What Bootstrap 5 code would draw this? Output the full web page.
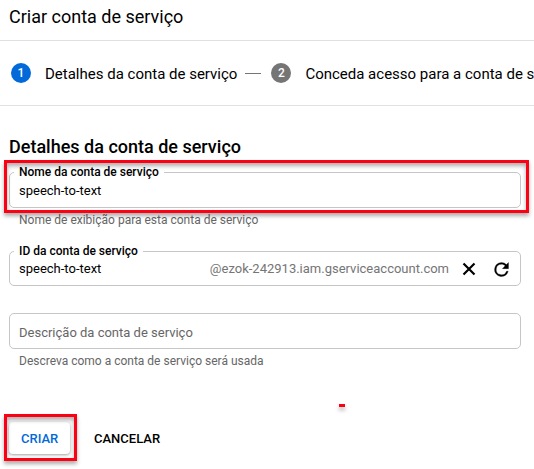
<!DOCTYPE html>
<html lang="pt-BR">
<head>
<meta charset="utf-8">
<meta name="viewport" content="width=device-width, initial-scale=1">
<title>Criar conta de serviço</title>
<link href="https://cdn.jsdelivr.net/npm/bootstrap@5.3.0/dist/css/bootstrap.min.css" rel="stylesheet">
<style>
  body { font-family: Roboto, "Liberation Sans", sans-serif; color: #000; height: 469px; overflow: hidden; }
  .page-head { height: 41px; padding: 0 9px 7px; border-color: #e0e0e0 !important; }
  .page-title { font-size: 18px; line-height: 24px; }
  .stepper { height: 65px; padding-left: 11px; border-color: #e0e0e0 !important; }
  .step-dot { width: 20px; height: 20px; font-size: 12px; line-height: 20px; background: #757575; }
  .step-dot.current { background: #0269d9; }
  .step-label { font-size: 15px; margin-left: 14px; line-height: 20px; padding-top: 2px; }
  .step-line { width: 16px; height: 1px; background: #757575; margin: 0 10px 0 8px; }
  .form-area { padding: 29px 13px 0 9px; }
  .section-title { font-size: 18px; line-height: 24px; height: 37px; }
  .field { height: 36px; border: 1px solid #c6c6c6; border-radius: 5px; padding: 2px 9px 0; font-size: 13px; line-height: 18px; }
  .field-id { height: 35px; margin-top: 23px; padding-top: 1px; }
  .field-desc { margin-top: 27px; color: #666; padding-top: 3px; }
  .field-label { top: -10px; left: 4px; padding: 0 5px; font-size: 12px; line-height: 18px; }
  .hint { font-size: 12px; line-height: 16px; height: 20px; padding: 4px 0 0 10px; color: #666; }
  .domain { color: #757575; }
  .clear-icon { margin-left: 13px; }
  .refresh-icon { margin: 0 -1px 0 15px; }
  .btn-flat { height: 32px; font-size: 13px; line-height: 18px; padding: 1px 12px 0; border: 0; border-radius: 4px; color: #000; }
  .btn-raised { width: 61px; color: #0269d9; box-shadow: 0 1px 3px rgba(0,0,0,.38); }
  .actions { padding-top: 53px; gap: 12px; }
  .highlight { border: 3px solid #fc0013; box-shadow: 0 3px 4px rgba(0,0,0,.32), inset 0 3px 4px rgba(0,0,0,.32); pointer-events: none; }
  .highlight-name { left: 4px; top: 160px; width: 525px; height: 53px; }
  .highlight-create { left: 4px; top: 414px; width: 73px; height: 47px; }
  .stray-dash { left: 339px; top: 404px; width: 6px; height: 3px; background: #fc0013; box-shadow: 0 3px 4px rgba(0,0,0,.35); }
</style>
</head>
<body class="bg-white position-relative">
  <header class="page-head border-bottom d-flex align-items-center">
    <h1 class="page-title fw-normal m-0">Criar conta de serviço</h1>
  </header>
  <nav class="stepper border-bottom d-flex align-items-center text-nowrap overflow-hidden">
    <span class="step-dot current rounded-circle text-white text-center fw-medium flex-shrink-0">1</span>
    <span class="step-label">Detalhes da conta de serviço</span>
    <span class="step-line flex-shrink-0"></span>
    <span class="step-dot rounded-circle text-white text-center fw-medium flex-shrink-0">2</span>
    <span class="step-label">Conceda acesso para a conta de s</span>
  </nav>
  <main class="form-area">
    <h2 class="section-title fw-medium m-0">Detalhes da conta de serviço</h2>
    <div class="field position-relative d-flex align-items-center">
      <label class="field-label position-absolute bg-white fw-medium">Nome da conta de serviço</label>
      <span>speech-to-text</span>
    </div>
    <div class="hint">Nome de exibição para esta conta de serviço</div>
    <div class="field field-id position-relative d-flex align-items-center">
      <label class="field-label position-absolute bg-white fw-medium">ID da conta de serviço</label>
      <span>speech-to-text</span>
      <span class="domain ms-auto">@ezok-242913.iam.gserviceaccount.com</span>
      <svg class="clear-icon flex-shrink-0" width="14" height="14" viewBox="0 0 14 14" fill="none" stroke="#000" stroke-width="2.2"><path d="M1.5 1.5l11 11M12.5 1.5l-11 11"/></svg>
      <svg class="refresh-icon flex-shrink-0" width="21" height="21" viewBox="0 0 24 24"><path d="M17.65 6.35A7.96 7.96 0 0 0 12 4a8 8 0 1 0 7.73 10h-2.08A6 6 0 1 1 12 6c1.66 0 3.14.69 4.22 1.78L13 11h7V4z" stroke="#000" stroke-width=".3"/></svg>
    </div>
    <div class="field field-desc d-flex align-items-center"><span>Descrição da conta de serviço</span></div>
    <div class="hint">Descreva como a conta de serviço será usada</div>
    <div class="actions d-flex">
      <button class="btn btn-flat btn-raised bg-white fw-medium">CRIAR</button>
      <button class="btn btn-flat fw-medium">CANCELAR</button>
    </div>
  </main>
  <div class="highlight highlight-name position-absolute"></div>
  <div class="highlight highlight-create position-absolute"></div>
  <div class="stray-dash position-absolute"></div>
<script src="https://cdn.jsdelivr.net/npm/bootstrap@5.3.0/dist/js/bootstrap.bundle.min.js"></script>
</body>
</html>
